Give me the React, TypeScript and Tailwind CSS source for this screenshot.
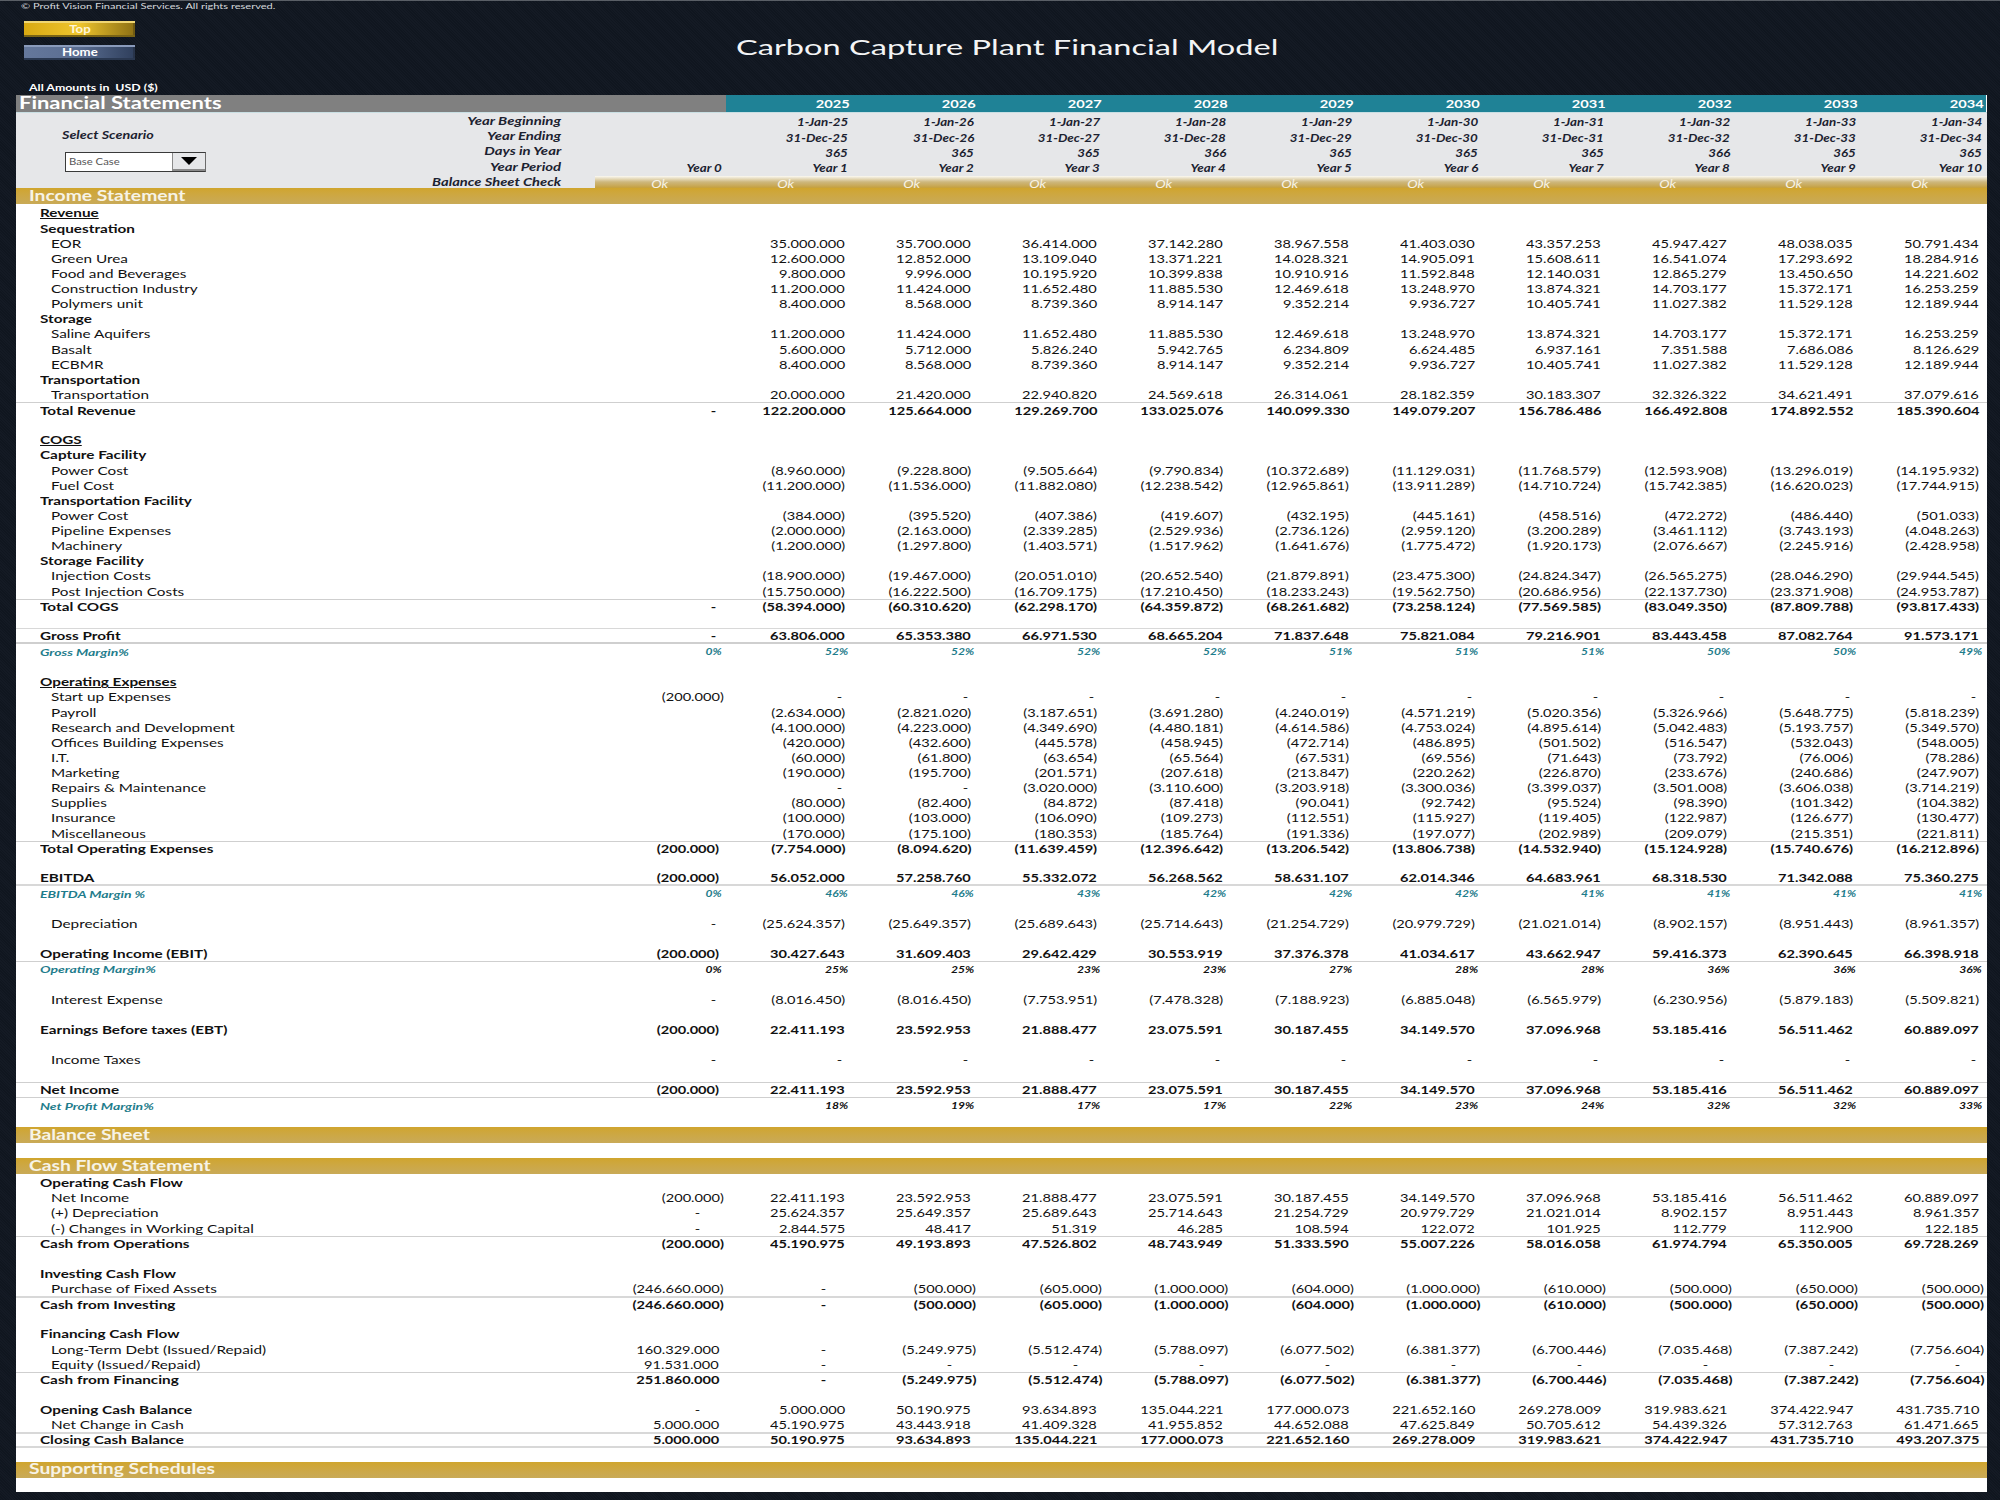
import React from "react"

type Row = {
  kind: "head" | "sub" | "item" | "total" | "pct" | "blank" | "band"
  label?: string
  y0?: string
  values?: string
  line?: string
  far?: boolean
  wide?: boolean
  teal?: boolean
}

const dashes = "- - - - - - - - - -"

const rows: Row[] = [
  { kind: "head", label: "Revenue" },
  { kind: "sub", label: "Sequestration" },
  { kind: "item", label: "EOR", values: "35.000.000 35.700.000 36.414.000 37.142.280 38.967.558 41.403.030 43.357.253 45.947.427 48.038.035 50.791.434" },
  { kind: "item", label: "Green Urea", values: "12.600.000 12.852.000 13.109.040 13.371.221 14.028.321 14.905.091 15.608.611 16.541.074 17.293.692 18.284.916" },
  { kind: "item", label: "Food and Beverages", values: "9.800.000 9.996.000 10.195.920 10.399.838 10.910.916 11.592.848 12.140.031 12.865.279 13.450.650 14.221.602" },
  { kind: "item", label: "Construction Industry", values: "11.200.000 11.424.000 11.652.480 11.885.530 12.469.618 13.248.970 13.874.321 14.703.177 15.372.171 16.253.259" },
  { kind: "item", label: "Polymers unit", values: "8.400.000 8.568.000 8.739.360 8.914.147 9.352.214 9.936.727 10.405.741 11.027.382 11.529.128 12.189.944" },
  { kind: "sub", label: "Storage" },
  { kind: "item", label: "Saline Aquifers", values: "11.200.000 11.424.000 11.652.480 11.885.530 12.469.618 13.248.970 13.874.321 14.703.177 15.372.171 16.253.259" },
  { kind: "item", label: "Basalt", values: "5.600.000 5.712.000 5.826.240 5.942.765 6.234.809 6.624.485 6.937.161 7.351.588 7.686.086 8.126.629" },
  { kind: "item", label: "ECBMR", values: "8.400.000 8.568.000 8.739.360 8.914.147 9.352.214 9.936.727 10.405.741 11.027.382 11.529.128 12.189.944" },
  { kind: "sub", label: "Transportation" },
  { kind: "item", label: "Transportation", values: "20.000.000 21.420.000 22.940.820 24.569.618 26.314.061 28.182.359 30.183.307 32.326.322 34.621.491 37.079.616" },
  { kind: "total", label: "Total Revenue", y0: "-", line: "border-t border-[#cfcfcf]", values: "122.200.000 125.664.000 129.269.700 133.025.076 140.099.330 149.079.207 156.786.486 166.492.808 174.892.552 185.390.604" },
  { kind: "blank" },
  { kind: "head", label: "COGS" },
  { kind: "sub", label: "Capture Facility" },
  { kind: "item", label: "Power Cost", values: "(8.960.000) (9.228.800) (9.505.664) (9.790.834) (10.372.689) (11.129.031) (11.768.579) (12.593.908) (13.296.019) (14.195.932)" },
  { kind: "item", label: "Fuel Cost", values: "(11.200.000) (11.536.000) (11.882.080) (12.238.542) (12.965.861) (13.911.289) (14.710.724) (15.742.385) (16.620.023) (17.744.915)" },
  { kind: "sub", label: "Transportation Facility" },
  { kind: "item", label: "Power Cost", values: "(384.000) (395.520) (407.386) (419.607) (432.195) (445.161) (458.516) (472.272) (486.440) (501.033)" },
  { kind: "item", label: "Pipeline Expenses", values: "(2.000.000) (2.163.000) (2.339.285) (2.529.936) (2.736.126) (2.959.120) (3.200.289) (3.461.112) (3.743.193) (4.048.263)" },
  { kind: "item", label: "Machinery", values: "(1.200.000) (1.297.800) (1.403.571) (1.517.962) (1.641.676) (1.775.472) (1.920.173) (2.076.667) (2.245.916) (2.428.958)" },
  { kind: "sub", label: "Storage Facility" },
  { kind: "item", label: "Injection Costs", values: "(18.900.000) (19.467.000) (20.051.010) (20.652.540) (21.879.891) (23.475.300) (24.824.347) (26.565.275) (28.046.290) (29.944.545)" },
  { kind: "item", label: "Post Injection Costs", values: "(15.750.000) (16.222.500) (16.709.175) (17.210.450) (18.233.243) (19.562.750) (20.686.956) (22.137.730) (23.371.908) (24.953.787)" },
  { kind: "total", label: "Total COGS", y0: "-", line: "border-t border-[#cfcfcf]", values: "(58.394.000) (60.310.620) (62.298.170) (64.359.872) (68.261.682) (73.258.124) (77.569.585) (83.049.350) (87.809.788) (93.817.433)" },
  { kind: "blank", line: "border-b border-[#d8d8d8]" },
  { kind: "total", label: "Gross Profit", y0: "-", line: "border-b-2 border-[#cfcfcf]", values: "63.806.000 65.353.380 66.971.530 68.665.204 71.837.648 75.821.084 79.216.901 83.443.458 87.082.764 91.573.171" },
  { kind: "pct", label: "Gross Margin%", y0: "0%", teal: true, values: "52% 52% 52% 52% 51% 51% 51% 50% 50% 49%" },
  { kind: "blank" },
  { kind: "head", label: "Operating Expenses" },
  { kind: "item", label: "Start up Expenses", y0: "(200.000)", wide: true, values: dashes },
  { kind: "item", label: "Payroll", values: "(2.634.000) (2.821.020) (3.187.651) (3.691.280) (4.240.019) (4.571.219) (5.020.356) (5.326.966) (5.648.775) (5.818.239)" },
  { kind: "item", label: "Research and Development", values: "(4.100.000) (4.223.000) (4.349.690) (4.480.181) (4.614.586) (4.753.024) (4.895.614) (5.042.483) (5.193.757) (5.349.570)" },
  { kind: "item", label: "Offices Building Expenses", values: "(420.000) (432.600) (445.578) (458.945) (472.714) (486.895) (501.502) (516.547) (532.043) (548.005)" },
  { kind: "item", label: "I.T.", values: "(60.000) (61.800) (63.654) (65.564) (67.531) (69.556) (71.643) (73.792) (76.006) (78.286)" },
  { kind: "item", label: "Marketing", values: "(190.000) (195.700) (201.571) (207.618) (213.847) (220.262) (226.870) (233.676) (240.686) (247.907)" },
  { kind: "item", label: "Repairs & Maintenance", values: "- - (3.020.000) (3.110.600) (3.203.918) (3.300.036) (3.399.037) (3.501.008) (3.606.038) (3.714.219)" },
  { kind: "item", label: "Supplies", values: "(80.000) (82.400) (84.872) (87.418) (90.041) (92.742) (95.524) (98.390) (101.342) (104.382)" },
  { kind: "item", label: "Insurance", values: "(100.000) (103.000) (106.090) (109.273) (112.551) (115.927) (119.405) (122.987) (126.677) (130.477)" },
  { kind: "item", label: "Miscellaneous", values: "(170.000) (175.100) (180.353) (185.764) (191.336) (197.077) (202.989) (209.079) (215.351) (221.811)" },
  { kind: "total", label: "Total Operating Expenses", y0: "(200.000)", line: "border-t border-[#cfcfcf]", values: "(7.754.000) (8.094.620) (11.639.459) (12.396.642) (13.206.542) (13.806.738) (14.532.940) (15.124.928) (15.740.676) (16.212.896)" },
  { kind: "blank" },
  { kind: "total", label: "EBITDA", y0: "(200.000)", line: "border-b-2 border-[#d8d8d8]", values: "56.052.000 57.258.760 55.332.072 56.268.562 58.631.107 62.014.346 64.683.961 68.318.530 71.342.088 75.360.275" },
  { kind: "pct", label: "EBITDA Margin %", y0: "0%", teal: true, values: "46% 46% 43% 42% 42% 42% 41% 41% 41% 41%" },
  { kind: "blank" },
  { kind: "item", label: "Depreciation", y0: "-", values: "(25.624.357) (25.649.357) (25.689.643) (25.714.643) (21.254.729) (20.979.729) (21.021.014) (8.902.157) (8.951.443) (8.961.357)" },
  { kind: "blank" },
  { kind: "total", label: "Operating Income (EBIT)", y0: "(200.000)", line: "border-b border-[#cfcfcf]", values: "30.427.643 31.609.403 29.642.429 30.553.919 37.376.378 41.034.617 43.662.947 59.416.373 62.390.645 66.398.918" },
  { kind: "pct", label: "Operating Margin%", y0: "0%", values: "25% 25% 23% 23% 27% 28% 28% 36% 36% 36%" },
  { kind: "blank" },
  { kind: "item", label: "Interest Expense", y0: "-", values: "(8.016.450) (8.016.450) (7.753.951) (7.478.328) (7.188.923) (6.885.048) (6.565.979) (6.230.956) (5.879.183) (5.509.821)" },
  { kind: "blank" },
  { kind: "total", label: "Earnings Before taxes (EBT)", y0: "(200.000)", values: "22.411.193 23.592.953 21.888.477 23.075.591 30.187.455 34.149.570 37.096.968 53.185.416 56.511.462 60.889.097" },
  { kind: "blank" },
  { kind: "item", label: "Income Taxes", y0: "-", values: dashes },
  { kind: "blank", line: "border-b border-[#cfcfcf]" },
  { kind: "total", label: "Net Income", y0: "(200.000)", line: "border-b border-[#cfcfcf]", values: "22.411.193 23.592.953 21.888.477 23.075.591 30.187.455 34.149.570 37.096.968 53.185.416 56.511.462 60.889.097" },
  { kind: "pct", label: "Net Profit Margin%", values: "18% 19% 17% 17% 22% 23% 24% 32% 32% 33%" },
  { kind: "blank" },
  { kind: "band", label: "Balance Sheet" },
  { kind: "blank" },
  { kind: "band", label: "Cash Flow Statement" },
  { kind: "sub", label: "Operating Cash Flow" },
  { kind: "item", label: "Net Income", y0: "(200.000)", wide: true, far: true, values: "22.411.193 23.592.953 21.888.477 23.075.591 30.187.455 34.149.570 37.096.968 53.185.416 56.511.462 60.889.097" },
  { kind: "item", label: "(+) Depreciation", y0: "-", wide: true, far: true, values: "25.624.357 25.649.357 25.689.643 25.714.643 21.254.729 20.979.729 21.021.014 8.902.157 8.951.443 8.961.357" },
  { kind: "item", label: "(-) Changes in Working Capital", y0: "-", wide: true, far: true, values: "2.844.575 48.417 51.319 46.285 108.594 122.072 101.925 112.779 112.900 122.185" },
  { kind: "total", label: "Cash from Operations", y0: "(200.000)", wide: true, far: true, line: "border-t border-[#cfcfcf]", values: "45.190.975 49.193.893 47.526.802 48.743.949 51.333.590 55.007.226 58.016.058 61.974.794 65.350.005 69.728.269" },
  { kind: "blank" },
  { kind: "sub", label: "Investing Cash Flow" },
  { kind: "item", label: "Purchase of Fixed Assets", y0: "(246.660.000)", wide: true, far: true, values: "- (500.000) (605.000) (1.000.000) (604.000) (1.000.000) (610.000) (500.000) (650.000) (500.000)" },
  { kind: "total", label: "Cash from Investing", y0: "(246.660.000)", wide: true, far: true, line: "border-t-2 border-[#d8d8d8]", values: "- (500.000) (605.000) (1.000.000) (604.000) (1.000.000) (610.000) (500.000) (650.000) (500.000)" },
  { kind: "blank" },
  { kind: "sub", label: "Financing Cash Flow" },
  { kind: "item", label: "Long-Term Debt (Issued/Repaid)", y0: "160.329.000", wide: true, far: true, values: "- (5.249.975) (5.512.474) (5.788.097) (6.077.502) (6.381.377) (6.700.446) (7.035.468) (7.387.242) (7.756.604)" },
  { kind: "item", label: "Equity (Issued/Repaid)", y0: "91.531.000", wide: true, far: true, values: dashes },
  { kind: "total", label: "Cash from Financing", y0: "251.860.000", wide: true, far: true, line: "border-t border-[#cfcfcf]", values: "- (5.249.975) (5.512.474) (5.788.097) (6.077.502) (6.381.377) (6.700.446) (7.035.468) (7.387.242) (7.756.604)" },
  { kind: "blank" },
  { kind: "sub", label: "Opening Cash Balance", y0: "-", far: true, values: "5.000.000 50.190.975 93.634.893 135.044.221 177.000.073 221.652.160 269.278.009 319.983.621 374.422.947 431.735.710" },
  { kind: "item", label: "Net Change in Cash", y0: "5.000.000", values: "45.190.975 43.443.918 41.409.328 41.955.852 44.652.088 47.625.849 50.705.612 54.439.326 57.312.763 61.471.665" },
  { kind: "total", label: "Closing Cash Balance", y0: "5.000.000", line: "border-t-2 border-b-2 border-[#d8d8d8]", values: "50.190.975 93.634.893 135.044.221 177.000.073 221.652.160 269.278.009 319.983.621 374.422.947 431.735.710 493.207.375" },
  { kind: "blank" },
  { kind: "band", label: "Supporting Schedules" },
]

const headerRows = [
  { label: "Year Beginning", y0: "", values: "1-Jan-25 1-Jan-26 1-Jan-27 1-Jan-28 1-Jan-29 1-Jan-30 1-Jan-31 1-Jan-32 1-Jan-33 1-Jan-34" },
  { label: "Year Ending", y0: "", values: "31-Dec-25 31-Dec-26 31-Dec-27 31-Dec-28 31-Dec-29 31-Dec-30 31-Dec-31 31-Dec-32 31-Dec-33 31-Dec-34" },
  { label: "Days in Year", y0: "", values: "365 365 365 366 365 365 365 366 365 365" },
  { label: "Year Period", y0: "Year 0", values: "Year_1 Year_2 Year_3 Year_4 Year_5 Year_6 Year_7 Year_8 Year_9 Year_10" },
]

const years = ["2025", "2026", "2027", "2028", "2029", "2030", "2031", "2032", "2033", "2034"]

function Left({ children, className = "" }: { children: React.ReactNode; className?: string }) {
  return <span className={"inline-block origin-left scale-x-[1.33] whitespace-nowrap " + className}>{children}</span>
}

function Right({ children, className = "" }: { children: React.ReactNode; className?: string }) {
  return <span className={"inline-block origin-right scale-x-[1.27] whitespace-nowrap " + className}>{children}</span>
}

function HeaderLabel({ children }: { children: React.ReactNode }) {
  return <span className="inline-block origin-right scale-x-[1.42] whitespace-nowrap">{children}</span>
}

function valuePad(text: string, row: Row) {
  if (text === "-") return row.far ? "pr-[26px]" : "pr-[10px]"
  if (text.endsWith(")") && row.wide) return "pr-[2px]"
  return "pr-[7px]"
}

function SheetRow({ row }: { row: Row }) {
  if (row.kind === "blank") return <div className={"h-[15.13px] " + (row.line ?? "")} />

  if (row.kind === "band") return <GoldBand label={row.label!} />

  const weight = row.kind === "total" ? "font-bold" : ""
  const labelWeight = row.kind === "sub" || row.kind === "head" ? "font-bold" : ""
  const values = row.values ? row.values.split(" ") : []

  if (row.kind === "pct") {
    const valueColor = row.teal ? "text-[#1f7d8c]" : "text-[#111]"
    return (
      <div className="grid h-[15.13px] grid-cols-[584px_repeat(11,126px)] items-center text-[9.5px] font-bold italic leading-none">
        <div className="pl-[24px] text-[10px] text-[#1f7d8c]">
          <span className="inline-block origin-left scale-x-[1.4] whitespace-nowrap">{row.label}</span>
        </div>
        <div className={"pr-[4px] text-right " + valueColor}>
          <Right>{row.y0}</Right>
        </div>
        {values.map((v, i) => (
          <div key={i} className={"pr-[4px] text-right " + valueColor}>
            <Right>{v}</Right>
          </div>
        ))}
      </div>
    )
  }

  return (
    <div
      className={
        "grid h-[15.13px] grid-cols-[584px_repeat(11,126px)] items-center text-[11.5px] leading-none text-[#111] " +
        weight +
        " " +
        (row.line ?? "")
      }
    >
      <div className={(row.kind === "item" ? "pl-[35px] " : "pl-[24px] ") + labelWeight}>
        <Left className={row.kind === "head" ? "underline" : ""}>{row.label}</Left>
      </div>
      <div className={"text-right " + (row.y0 ? valuePad(row.y0, row) : "")}>
        <Right>{row.y0}</Right>
      </div>
      {values.map((v, i) => (
        <div key={i} className={"text-right " + valuePad(v, row)}>
          <Right>{v}</Right>
        </div>
      ))}
    </div>
  )
}

function GoldBand({ label }: { label: string }) {
  return (
    <div className="-mt-[1px] mb-[1px] flex h-[16px] items-center bg-gradient-to-b from-[#d0a52d] to-[#c9aa57] pl-[13px] text-[14.5px] font-bold leading-none text-[#f7f3e6]">
      <Left>{label}</Left>
    </div>
  )
}

export default function App() {
  return (
    <div className="min-h-[1500px] w-[2000px] bg-[repeating-linear-gradient(45deg,#10161f_0px,#10161f_1px,#141a24_1px,#141a24_2px)] font-['Lato',sans-serif]">
      <div className="h-[95px] border-t border-[#5a5f66]">
        <div className="pl-[21px] pt-[1px] text-[8.3px] leading-[9px] text-[#d5d8dc]">
          <Left>© Profit Vision Financial Services. All rights reserved.</Left>
        </div>
        <div className="mt-[10px] grid grid-cols-[1fr_auto_1fr] items-start">
          <div className="flex flex-col gap-[8px] pl-[24px]">
            <div className="flex h-[16px] w-[111px] items-center justify-center bg-gradient-to-r from-[#d9a911] via-[#eec52d] to-[#8d7014] text-[11px] font-bold text-[#fff6d8] shadow-[inset_0_2px_0_#f0d672,inset_0_-2px_0_#7a6415,inset_-2px_0_0_#6f5a12]">
              <span className="inline-block scale-x-[1.2]">Top</span>
            </div>
            <div className="flex h-[15px] w-[111px] items-center justify-center bg-gradient-to-r from-[#65789c] via-[#5a6d91] to-[#2f3f5c] text-[11px] font-bold text-white shadow-[inset_0_2px_0_#8a9bbb,inset_0_-2px_0_#2a3850,inset_-2px_0_0_#28344a]">
              <span className="inline-block scale-x-[1.2]">Home</span>
            </div>
          </div>
          <div className="ml-[14px] mt-[13px] text-[22px] leading-[26px] text-[#f3f4f5]">
            <span className="inline-block scale-x-[1.48] whitespace-nowrap">Carbon Capture Plant Financial Model</span>
          </div>
          <div />
        </div>
        <div className="mt-[23px] pl-[29px] text-[9.3px] font-bold leading-[10px] text-white">
          <Left>All Amounts in&nbsp;&nbsp;USD ($)</Left>
        </div>
      </div>

      <div className="ml-[16px] w-[1971px] bg-white">
        <div className="grid h-[18px] grid-cols-[710px_repeat(10,126px)] border-b border-[#c9dfe3] text-[11.5px] font-bold leading-none text-white">
          <div className="flex items-center bg-[#808080] pl-[3px] text-[16.5px]">
            <Left>Financial Statements</Left>
          </div>
          {years.map((y) => (
            <div key={y} className="flex items-center justify-end bg-[#1f8296] pr-[2px]">
              <Right>{y}</Right>
            </div>
          ))}
        </div>

        <div className="flex h-[75px] bg-[#e6e7e9] pt-[2px] text-[10.5px] font-bold italic leading-none text-[#1c2230]">
          <div className="w-[200px] shrink-0 pl-[46px] pt-[15px] text-[10.8px]">
            <Left>Select Scenario</Left>
            <div className="ml-[3px] mt-[11px] flex h-[20px] w-[141px] border border-[#3a3a3a] border-r-[#6b6b6b] bg-white">
              <div className="flex flex-1 items-center pl-[3px] text-[8.5px] font-normal not-italic text-[#555]">
                <Left>Base Case</Left>
              </div>
              <div className="flex w-[33px] items-center justify-center border-b-2 border-l border-[#8a8a8a] bg-[#e6e7e9]">
                <svg width="16" height="8" viewBox="0 0 16 8">
                  <path d="M0 0H16L8 8Z" fill="#000" />
                </svg>
              </div>
            </div>
          </div>
          <div className="flex-1">
            {headerRows.map((r) => (
              <div key={r.label} className="grid h-[15.25px] grid-cols-[345px_39px_repeat(11,126px)] items-center">
                <div className="-mt-[3px] text-right">
                  <HeaderLabel>{r.label}</HeaderLabel>
                </div>
                <div />
                <div className="pr-[4px] text-right">
                  <Right>{r.y0}</Right>
                </div>
                {r.values.split(" ").map((v, i) => (
                  <div key={i} className="pr-[4px] text-right">
                    <Right>{v.replace("_", " ")}</Right>
                  </div>
                ))}
              </div>
            ))}
            <div className="grid h-[12px] grid-cols-[345px_34px_1fr] items-center">
              <div className="text-right">
                <span className="inline-block origin-right scale-x-[1.4] whitespace-nowrap">Balance Sheet Check</span>
              </div>
              <div />
              <div className="grid h-[12px] grid-cols-[repeat(11,126px)] bg-gradient-to-b from-[#fbf9f2] via-[#cdb77c] to-[#c6a03a] pl-[5px] pt-[2px] text-center text-[11px] font-normal text-[#f7f3e6]">
                {Array.from({ length: 11 }).map((_, i) => (
                  <span key={i} className="pr-[6px]">
                    <span className="inline-block scale-x-[1.27]">Ok</span>
                  </span>
                ))}
              </div>
            </div>
          </div>
        </div>

        <div className="mb-[1.6px] flex h-[16px] items-center bg-gradient-to-b from-[#d0a52d] to-[#c9aa57] pl-[13px] text-[14.5px] font-bold leading-none text-[#f7f3e6]">
          <Left>Income Statement</Left>
        </div>

        {rows.map((row, i) => (
          <SheetRow key={i} row={row} />
        ))}
        <div className="h-[13px]" />
      </div>
    </div>
  )
}
